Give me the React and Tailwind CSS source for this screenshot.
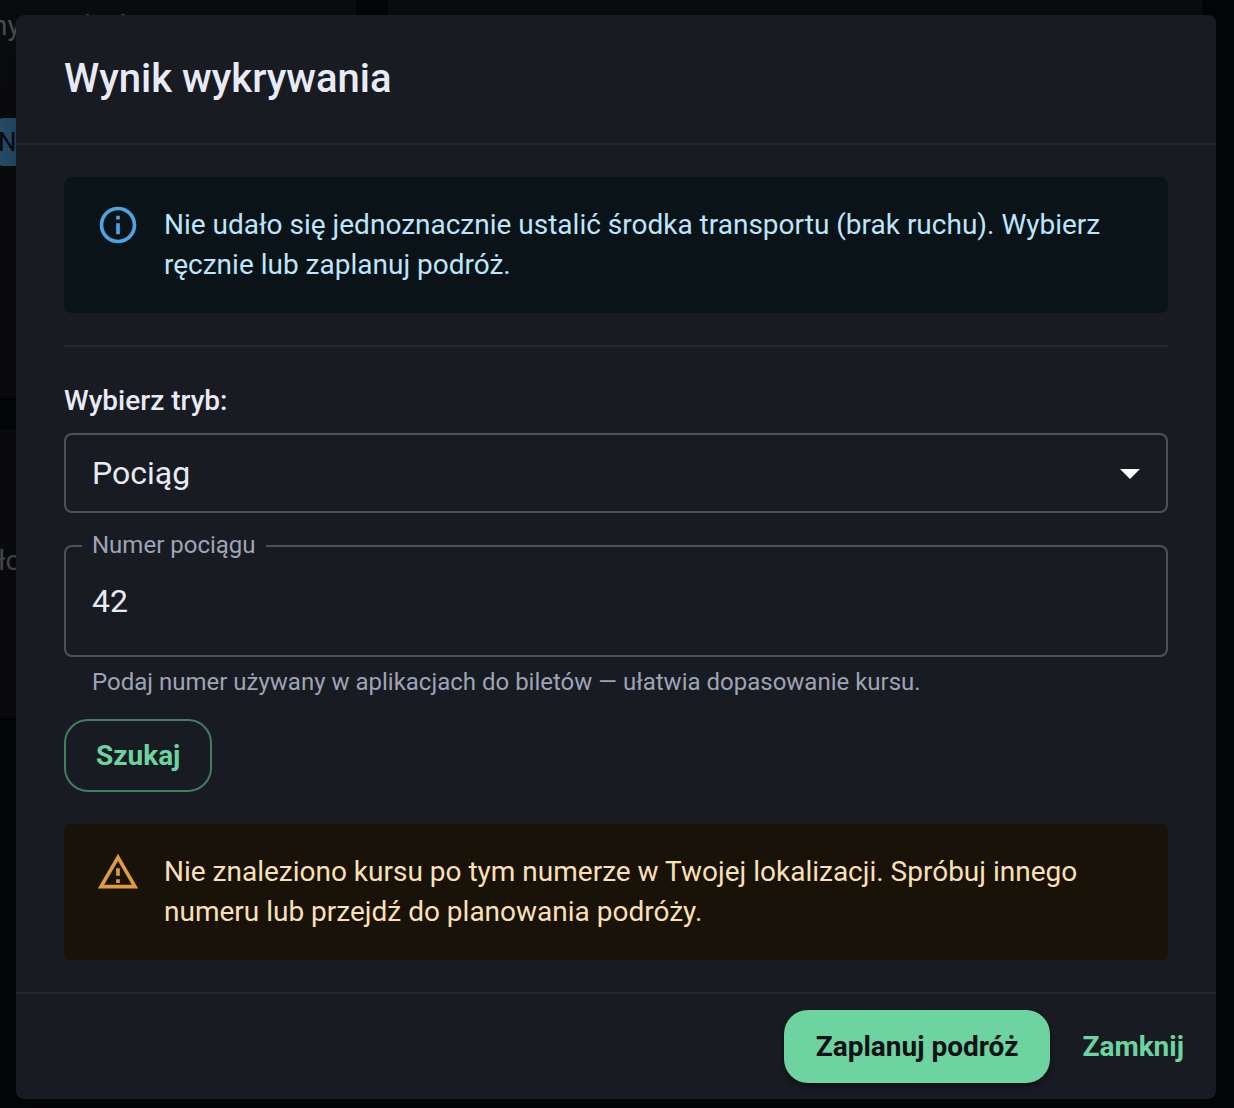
function InfoIcon() {
  return (
    <svg viewBox="0 0 24 24" className="size-11 shrink-0 fill-[#4fa3df]" aria-hidden="true">
      <path d="M11,9H13V7H11M12,20C7.59,20 4,16.41 4,12C4,7.59 7.59,4 12,4C16.41,4 20,7.59 20,12C20,16.41 16.41,20 12,20M12,2A10,10 0 0,0 2,12A10,10 0 0,0 12,22A10,10 0 0,0 22,12A10,10 0 0,0 12,2M11,17H13V11H11V17Z" />
    </svg>
  );
}

function WarningIcon() {
  return (
    <svg viewBox="0 0 24 24" className="size-11 shrink-0 fill-[#dc9c40]" aria-hidden="true">
      <path d="M12 5.99L19.53 19H4.47L12 5.99M12 2L1 21h22L12 2zm1 14h-2v2h2v-2zm0-6h-2v4h2v-4z" />
    </svg>
  );
}

function Alert({ icon, className, children }) {
  return (
    <div role="alert" className={`flex gap-6 rounded-lg px-8 py-3 ${className}`}>
      <div className="py-3.5">{icon}</div>
      <p className="py-4 text-[28px] leading-10">{children}</p>
    </div>
  );
}

function Backdrop() {
  return (
    <div
      aria-hidden="true"
      className="absolute inset-0 grid grid-cols-[356px_1fr] gap-8 overflow-hidden bg-[#040507] pr-8 text-[28px] leading-10"
    >
      <div className="flex flex-col gap-8">
        <div className="flex h-[397px] flex-col items-start bg-[#0b0c0f]">
          <p className="mt-1.5 -ml-2 text-[#4b4d53]">ny wynik skanowania</p>
          <span className="-ml-1 mt-[72px] h-12 rounded-lg bg-[#28536f] pl-0.5 pr-6 text-[26px] leading-12 text-[#06090c]">
            N
          </span>
        </div>
        <div className="h-[288px] bg-[#0b0c0f] pt-28 text-[#4b4d53]">
          <p className="-ml-0.5">ło</p>
        </div>
      </div>
      <div className="h-[397px] bg-[#0b0c0f]" />
    </div>
  );
}

export default function App() {
  return (
    <div className="relative min-h-screen overflow-hidden bg-[#040507] pt-[15px] pr-[18px] pb-[9px] pl-4 font-[Roboto,sans-serif] text-[#e8ebf5]">
      <Backdrop />
      <div
        role="dialog"
        aria-modal="true"
        aria-labelledby="dialog-title"
        className="relative rounded-lg bg-[#181b22] shadow-2xl shadow-black/60"
      >
        <h2 id="dialog-title" className="px-12 py-8 text-[40px] leading-16 font-medium">
          Wynik wykrywania
        </h2>
        <div className="border-y-2 border-[#23262d] px-12 py-8">
          <Alert icon={<InfoIcon />} className="bg-[#0a1318] text-[#bee5fb]">
            Nie udało się jednoznacznie ustalić środka transportu (brak ruchu). Wybierz ręcznie lub zaplanuj podróż.
          </Alert>
          <hr className="my-8 border-t-2 border-[#23262d]" />

          <label htmlFor="mode" className="block text-[28px] leading-11 font-medium">
            Wybierz tryb:
          </label>
          <div className="relative mt-2.5">
            <select
              id="mode"
              defaultValue="train"
              className="block h-20 w-full appearance-none rounded-lg border-2 border-[#4f5154] bg-[#181b22] px-[26px] text-[32px]"
            >
              <option value="train">Pociąg</option>
              <option value="bus">Autobus</option>
              <option value="tram">Tramwaj</option>
            </select>
            <svg
              viewBox="0 0 24 24"
              className="pointer-events-none absolute top-4 right-3.5 size-12 fill-white"
              aria-hidden="true"
            >
              <path d="M7 10l5 5 5-5z" />
            </svg>
          </div>

          <div className="relative mt-8">
            <input
              id="number"
              type="text"
              defaultValue="42"
              aria-describedby="number-hint"
              className="block h-28 w-full rounded-lg border-2 border-[#4f5154] bg-transparent px-[26px] text-[32px]"
            />
            <label
              htmlFor="number"
              className="absolute -top-4 left-[18px] bg-[#181b22] px-2.5 text-2xl leading-8 text-[#9ea4b5]"
            >
              Numer pociągu
            </label>
          </div>
          <p id="number-hint" className="mt-1.5 px-7 text-2xl leading-[38px] text-[#9ea4b5]">
            Podaj numer używany w aplikacjach do biletów — ułatwia dopasowanie kursu.
          </p>

          <button
            type="button"
            className="mt-4.5 mb-8 block h-[73px] rounded-3xl border-2 border-[#427d61] px-[30px] text-[28px] font-bold text-[#6dd3a0]"
          >
            Szukaj
          </button>

          <Alert icon={<WarningIcon />} className="bg-[#191209] text-[#fbe0b7]">
            Nie znaleziono kursu po tym numerze w Twojej lokalizacji. Spróbuj innego numeru lub przejdź do planowania
            podróży.
          </Alert>
        </div>
        <div className="flex justify-end gap-4 p-4">
          <button
            type="button"
            className="h-[73px] rounded-3xl bg-[#6dd3a0] px-8 text-[28px] font-bold text-[#0e1217] shadow-md shadow-black/40"
          >
            Zaplanuj podróż
          </button>
          <button type="button" className="h-[73px] rounded-3xl px-4 text-[28px] font-bold text-[#6dd3a0]">
            Zamknij
          </button>
        </div>
      </div>
    </div>
  );
}
